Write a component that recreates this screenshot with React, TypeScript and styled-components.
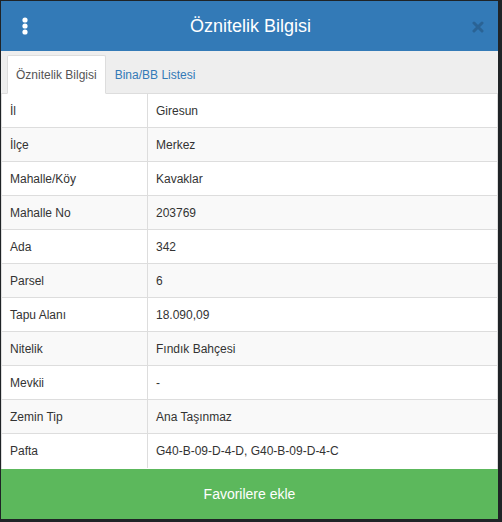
import React, { useState } from "react";
import styled, { createGlobalStyle } from "styled-components";

const GlobalStyle = createGlobalStyle`
  html, body {
    margin: 0;
    padding: 0;
    background: #1f2326;
  }
  body {
    font-family: "Liberation Sans", Arial, sans-serif;
    font-size: 12px;
    color: #333;
  }
`;

const Page = styled.div`
  width: 502px;
  height: 522px;
  padding: 1px 4px 3px 1px;
  box-sizing: border-box;
`;

const Panel = styled.div`
  width: 497px;
  height: 518px;
  display: flex;
  flex-direction: column;
  background: #fff;
`;

const Header = styled.div`
  height: 50px;
  flex-shrink: 0;
  background: #337ab7;
  display: grid;
  grid-template-columns: 48px 1fr 48px;
  align-items: center;
`;

const Title = styled.div`
  text-align: center;
  color: #fff;
  font-size: 18px;
  font-weight: normal;
  padding-left: 2px;
`;

const IconButton = styled.button<{ $end?: boolean }>`
  background: none;
  border: none;
  padding: ${({ $end }) => ($end ? "2px 14px 0 0" : "0")};
  height: 50px;
  display: flex;
  align-items: center;
  justify-content: ${({ $end }) => ($end ? "flex-end" : "center")};
  cursor: pointer;
`;

const TabBar = styled.div`
  height: 43px;
  flex-shrink: 0;
  background: #eee;
  border-bottom: 1px solid #ddd;
  display: flex;
  align-items: flex-end;
  padding-left: 6px;
  box-sizing: border-box;
`;

const Tab = styled.button<{ $active: boolean }>`
  height: 39px;
  margin-bottom: -1px;
  padding: 0 8px;
  font-family: "Liberation Sans", Arial, sans-serif;
  font-size: 12px;
  background: ${({ $active }) => ($active ? "#fff" : "transparent")};
  color: ${({ $active }) => ($active ? "#555" : "#337ab7")};
  border: 1px solid ${({ $active }) => ($active ? "#ddd" : "transparent")};
  border-bottom-color: ${({ $active }) => ($active ? "#fff" : "transparent")};
  border-radius: 2px 2px 0 0;
  cursor: pointer;
`;

const Table = styled.div`
  flex: 1;
  border-left: 1px solid #ddd;
  border-right: 1px solid #ddd;
  display: flex;
  flex-direction: column;
`;

const Row = styled.div<{ $striped: boolean }>`
  height: 34px;
  display: grid;
  grid-template-columns: 145px 1fr;
  background: ${({ $striped }) => ($striped ? "#f9f9f9" : "#fff")};
  border-bottom: 1px solid #ddd;
  box-sizing: border-box;
  &:last-child {
    border-bottom: none;
  }
`;

const Cell = styled.div`
  display: flex;
  align-items: center;
  padding-left: 8px;
  & + & {
    border-left: 1px solid #ddd;
  }
`;

const AddButton = styled.button`
  height: 50px;
  flex-shrink: 0;
  border: none;
  background: #5cb85c;
  color: #fff;
  font-family: "Liberation Sans", Arial, sans-serif;
  font-size: 14px;
  cursor: pointer;
`;

const rows: [string, string][] = [
  ["İl", "Giresun"],
  ["İlçe", "Merkez"],
  ["Mahalle/Köy", "Kavaklar"],
  ["Mahalle No", "203769"],
  ["Ada", "342"],
  ["Parsel", "6"],
  ["Tapu Alanı", "18.090,09"],
  ["Nitelik", "Fındık Bahçesi"],
  ["Mevkii", "-"],
  ["Zemin Tip", "Ana Taşınmaz"],
  ["Pafta", "G40-B-09-D-4-D, G40-B-09-D-4-C"],
];

const App: React.FC = () => {
  const [tab, setTab] = useState(0);
  return (
    <Page>
      <GlobalStyle />
      <Panel>
        <Header>
          <IconButton>
            <svg width="6" height="18" viewBox="0 0 6 18">
              <circle cx="3" cy="3" r="2.6" fill="#fff" />
              <circle cx="3" cy="9" r="2.6" fill="#fff" />
              <circle cx="3" cy="15" r="2.6" fill="#fff" />
            </svg>
          </IconButton>
          <Title>Öznitelik Bilgisi</Title>
          <IconButton $end>
            <svg width="12" height="12" viewBox="0 0 12 12">
              <path d="M2 2 L10 10 M10 2 L2 10" stroke="#2a6395" strokeWidth="3" strokeLinecap="round" />
            </svg>
          </IconButton>
        </Header>
        <TabBar>
          <Tab $active={tab === 0} onClick={() => setTab(0)}>Öznitelik Bilgisi</Tab>
          <Tab $active={tab === 1} onClick={() => setTab(1)}>Bina/BB Listesi</Tab>
        </TabBar>
        <Table>
          {rows.map(([k, v], i) => (
            <Row key={k} $striped={i % 2 === 1}>
              <Cell>{k}</Cell>
              <Cell>{v}</Cell>
            </Row>
          ))}
        </Table>
        <AddButton>Favorilere ekle</AddButton>
      </Panel>
    </Page>
  );
};

export default App;
